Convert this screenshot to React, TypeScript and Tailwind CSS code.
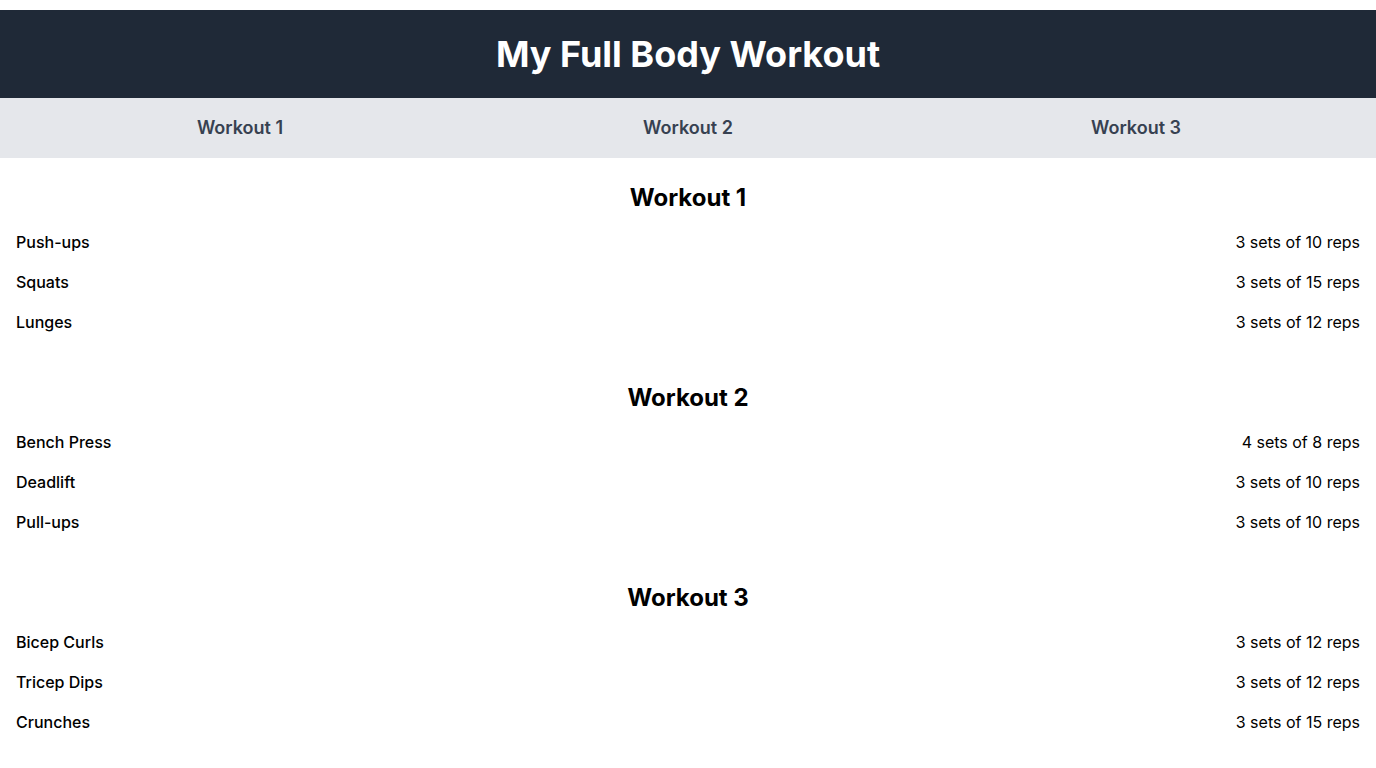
import React from "react";

const workouts = [
  {
    title: "Workout 1",
    items: [
      ["Push-ups", "3 sets of 10 reps"],
      ["Squats", "3 sets of 15 reps"],
      ["Lunges", "3 sets of 12 reps"],
    ],
  },
  {
    title: "Workout 2",
    items: [
      ["Bench Press", "4 sets of 8 reps"],
      ["Deadlift", "3 sets of 10 reps"],
      ["Pull-ups", "3 sets of 10 reps"],
    ],
  },
  {
    title: "Workout 3",
    items: [
      ["Bicep Curls", "3 sets of 12 reps"],
      ["Tricep Dips", "3 sets of 12 reps"],
      ["Crunches", "3 sets of 15 reps"],
    ],
  },
];

export default function App() {
  return (
    <div className="min-h-screen bg-white pt-2.5 font-['Inter',sans-serif] text-black">
      <header className="bg-[#1f2937] py-6 text-center">
        <h1 className="text-4xl font-bold text-white">My Full Body Workout</h1>
      </header>
      <nav className="grid grid-cols-3 bg-[#e5e7eb] px-4 py-4">
        {workouts.map((w) => (
          <a key={w.title} className="text-center text-lg font-semibold text-[#374151]">
            {w.title}
          </a>
        ))}
      </nav>
      <main className="px-4 pt-6">
        {workouts.map((w) => (
          <section key={w.title} className="mb-12">
            <h2 className="mb-4 text-center text-2xl font-bold">{w.title}</h2>
            <ul>
              {w.items.map(([name, reps]) => (
                <li key={name} className="mb-4 flex justify-between text-base">
                  <span className="font-medium">{name}</span>
                  <span>{reps}</span>
                </li>
              ))}
            </ul>
          </section>
        ))}
      </main>
    </div>
  );
}
